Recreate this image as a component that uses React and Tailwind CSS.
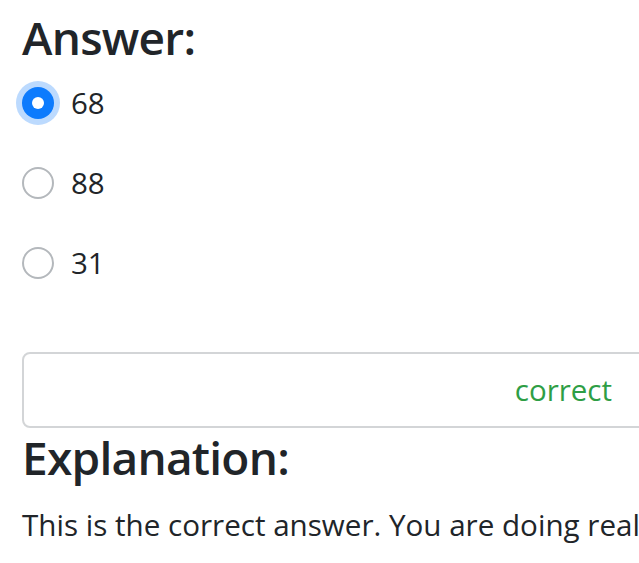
const options = [
	{ value: "68", checked: true },
	{ value: "88", checked: false },
	{ value: "31", checked: false },
];

function Radio({ checked }) {
	if (checked) {
		return (
			<span className="w-[32px] h-[32px] rounded-full bg-[#0d7bfd] flex items-center justify-center shrink-0 ring-[6px] ring-[#bcdafe]">
				<span className="w-[12px] h-[12px] rounded-full bg-white"></span>
			</span>
		);
	}
	return <span className="w-[32px] h-[32px] rounded-full border-2 border-[#b4b8bc] bg-white shrink-0"></span>;
}

export default function App() {
	return (
		<div className="w-[639px] h-[563px] overflow-hidden bg-white text-[#212529] font-['Open_Sans',sans-serif] pl-[22px]">
			<h3 className="text-[46px] font-semibold leading-[1.2] mt-[10px] tracking-[-0.75px]">Answer:</h3>
			<div className="flex flex-col mt-[-2px]">
				{options.map((o) => (
					<label key={o.value} className="flex items-center gap-[17px] h-[80px] text-[29.5px]">
						<Radio checked={o.checked} />
						<span>{o.value}</span>
					</label>
				))}
			</div>
			<div className="mt-[49px] h-[76px] w-[700px] border-2 border-[#d3d5d7] rounded-[8px] flex items-center justify-end pr-[108px]">
				<span className="text-[29.5px] text-[#2e9e45]">correct</span>
			</div>
			<h3 className="text-[46px] font-semibold leading-[1.2] mt-[2px] tracking-[-0.75px]">Explanation:</h3>
			<p className="text-[29.6px] leading-[1.5] mt-[18px] whitespace-nowrap">This is the correct answer. You are doing really well!</p>
		</div>
	);
}
